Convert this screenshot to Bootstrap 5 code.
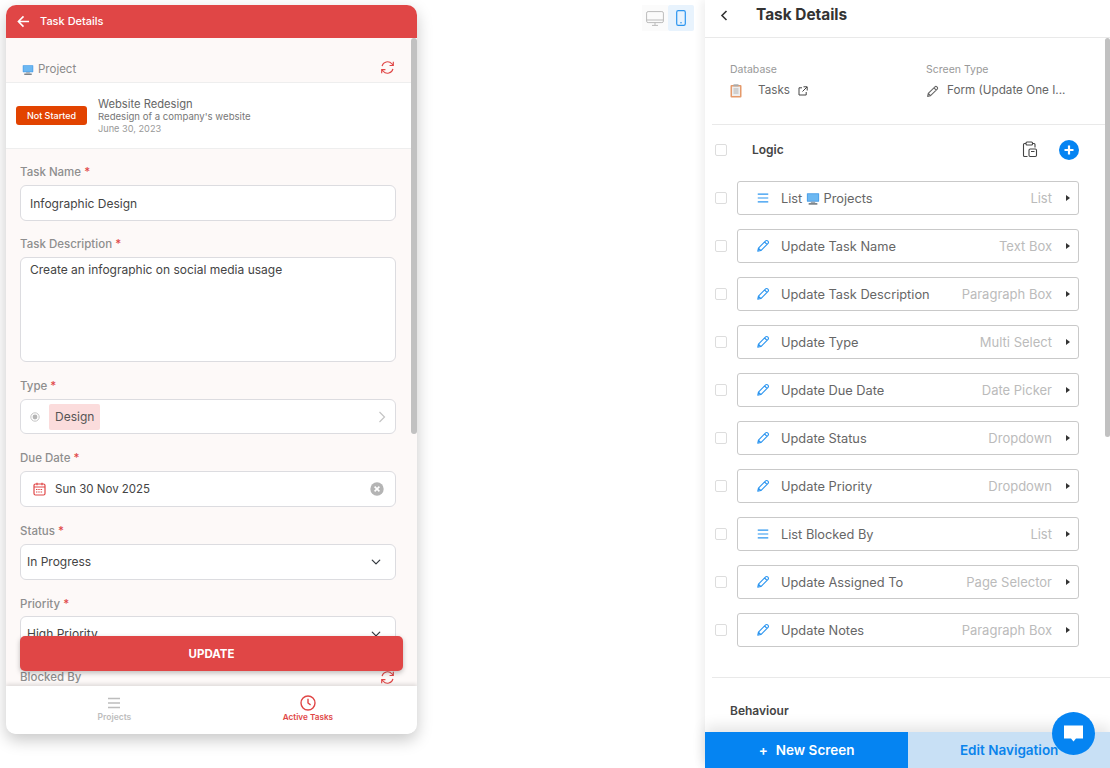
<!DOCTYPE html>
<html lang="en">
<head>
    <meta charset="UTF-8">
    <title>Task Details</title>
    <link href="https://cdn.jsdelivr.net/npm/bootstrap@5.3.0/dist/css/bootstrap.min.css" rel="stylesheet">
    <style>
        body { font-family: Inter, "Liberation Sans", sans-serif; height: 768px; overflow: hidden; background: #fff; color: #555; font-size: 13px; }

        /* phone preview */
        .phone { width: 411px; height: 729px; margin: 5px 0 0 6px; border-radius: 10px; box-shadow: 0 6px 16px rgba(0,0,0,.22); background: #fff; overflow: hidden; flex: none; }
        .phone-head { height: 33px; background: #e04646; color: #fff; font-weight: 500; font-size: 11px; padding-left: 11px; gap: 6px; }
        .phone-body { height: 648px; background: #fdf9f8; overflow: hidden; position: relative; }
        .phone-bar { position: absolute; right: 0; top: 0; width: 6px; height: 396px; background: #c1c1c1; border-radius: 3px; }
        .proj-row { height: 45px; padding: 22px 22px 0 16px; border-bottom: 1px solid #eee; color: #8b8b8b; font-size: 11.5px; }
        .proj-row span { line-height: 15px; margin-top: 1px; padding-top: 1px; }
        .proj-card { height: 66px; background: #fff; border-bottom: 1px solid #eee; padding-left: 10px; gap: 11px; }
        .status-tag { width: 71px; height: 19px; background: #e24300; color: #fff; font-size: 9px; border-radius: 3px; font-weight: 500; }
        .proj-title { font-size: 11.2px; line-height: 14px; color: #666; padding-top: 1px; }
        .proj-sub { font-size: 9.6px; line-height: 12px; color: #777; }
        .proj-date { font-size: 9.2px; line-height: 12px; color: #999; }
        .fields { padding: 16px 21px 0 14px; }
        .fld-label { font-size: 11.5px; line-height: 15px; color: #8e8e8e; margin-bottom: 5px; font-weight: 500; }
        .fld-label b { color: #e04646; font-weight: 500; }
        .fields .form-control, .fields .form-select, .pick-box { border: 1px solid #dcdce0; border-radius: 6px; font-size: 12px; color: #444; background-color: #fff; }
        .fields .form-control { height: 36px; padding: 0 9px; margin-bottom: 16px; }
        .fields textarea.form-control { height: 105px; padding: 3px 9px; margin-bottom: 17px; resize: none; }
        .fields .form-select { height: 36px; padding: 0 6px; margin-bottom: 17px; background-position: right 13px center; background-size: 12px 10px; }
        .pick-box { height: 35px; padding: 0 9px; margin-bottom: 17px; }
        .date-box { height: 36px; padding: 0 11px 0 12px; margin-bottom: 17px; gap: 9px; font-size: 11.5px; }
        .date-box span { padding-top: 2px; }
        .type-chip { background: #fbdcdc; border-radius: 2px; height: 26px; padding: 0 6px; margin-left: 9px; line-height: 26px; color: #555; }
        .prio-label { margin-bottom: 4px; }
        .blocked { margin-top: 18px; padding-right: 1px; }
        .btn-update { position: absolute; left: 14px; top: 598px; width: 383px; height: 35px; padding: 3px 0 0; background: #e04646; color: #fff; font-weight: 700; font-size: 11.5px; border: 0; border-radius: 5px; box-shadow: 0 2px 5px rgba(0,0,0,.25); }
        .btn-update:hover { background: #e04646; color: #fff; }
        .phone-foot { height: 48px; background: #fff; box-shadow: 0 -2px 4px rgba(0,0,0,.12); position: relative; }
        .foot-tab { font-size: 8.5px; font-weight: 600; color: #bdbdbd; padding-top: 9px; line-height: 11px; gap: 1px; }
        .foot-tab.on { color: #e04646; font-size: 8.2px; }
        .foot-tab:first-child { width: 53%; padding-right: 1px; }
        .foot-tab:last-child { width: 47%; padding-right: 25px; }

        /* device switch */
        .middle { flex: 1 1 auto; padding: 5px 11px 0 0; }
        .device-btn { width: 26px; height: 26px; background: #fbfbfb; }
        .device-btn.on { background: #e8f3fd; border-radius: 2px; }

        /* builder panel */
        .side { width: 405px; height: 768px; flex: none; position: relative; box-shadow: -4px 0 8px rgba(0,0,0,.06); }
        .side-head { height: 38px; border-bottom: 1px solid #e9e9e9; padding: 0 0 6px 15px; gap: 28px; }
        .side-head h1 { font-size: 15.4px; font-weight: 700; color: #333; margin: 0; }
        .side-bar { position: absolute; right: 0; top: 38px; width: 5px; height: 399px; background: #c1c1c1; border-radius: 3px; }
        .meta { height: 87px; margin-left: 7px; border-bottom: 1px solid #e9e9e9; padding: 25px 0 0 18px; }
        .meta-cap { font-size: 10.5px; color: #999; line-height: 13px; margin-bottom: 7px; }
        .meta-val { font-size: 11.7px; color: #666; height: 16px; }
        .meta-a { width: 196px; }
        .logic-row { height: 49px; padding: 0 31px 0 10px; }
        .chk.form-check-input { width: 12px; height: 12px; margin: 0; border: 1px solid #ddd; border-radius: 2px; flex: none; }
        .logic-row strong { font-size: 12px; color: #444; margin-left: 25px; font-weight: 600; }
        .clip-icon { margin-right: 21px; }
        .step-row { padding-left: 10px; height: 48px; gap: 10px; }
        .step-box { width: 342px; height: 34px; border: 1px solid #c9c9c9; border-radius: 3px; padding: 0 8px 0 18px; font-size: 12.8px; color: #666; }
        .step-box .step-kind { margin-left: auto; margin-right: 14px; color: #bbb; font-size: 13px; padding-top: 1px; }
        .step-name { margin-left: 11px; padding-top: 1px; }
        .arrow-r { width: 0; height: 0; border-left: 4px solid #333; border-top: 3.5px solid transparent; border-bottom: 3.5px solid transparent; }
        .steps-end { margin: 23px 0 0 7px; border-top: 1px solid #e9e9e9; padding: 24px 0 0 18px; font-size: 12px; font-weight: 600; color: #444; }
        .side-foot { position: absolute; left: 0; right: 0; bottom: 0; height: 36px; box-shadow: 0 -6px 14px rgba(0,0,0,.1); }
        .foot-new, .foot-nav { width: 50.2%; font-size: 13.5px; font-weight: 600; border: 0; border-radius: 0; }
        .foot-new, .foot-new:hover { background: #0584f2; color: #fff; }
        .foot-nav, .foot-nav:hover { background: #c8e0f5; color: #0a84ec; width: 49.8%; }
        .chat-bubble { position: absolute; left: 347px; top: 712px; width: 43px; height: 43px; border-radius: 50%; background: #0584f2; }
    </style>
</head>
<body class="d-flex">
    <svg width="0" height="0" class="position-absolute">
        <defs>
            <symbol id="sync" viewBox="0 0 16 16"><path d="M2.2 6.6A6 6 0 0 1 12.6 4l1.4 1.6M13.8 9.4A6 6 0 0 1 3.4 12L2 10.4M14.2 1.8V5.8H10.2M1.8 14.2V10.2H5.8" fill="none" stroke="#e04646" stroke-width="1.2"/></symbol>
            <symbol id="pc" viewBox="0 0 16 16"><rect x="1" y="1.5" width="14" height="9.5" rx=".6" fill="#4a9fe8"/><rect x="2" y="2.5" width="12" height="7.5" fill="#6cb8f2"/><rect x="5.5" y="11" width="5" height="1.5" fill="#9aa3aa"/><rect x="3" y="12.5" width="10" height="2.2" rx=".4" fill="#7d858c"/></symbol>
            <symbol id="pen" viewBox="0 0 16 16"><path d="M2 14l.8-3.6L11 2.2a1.6 1.6 0 0 1 2.3 0l.5.5a1.6 1.6 0 0 1 0 2.3L5.6 13.2zM2.8 10.4l2.8 2.8M9.8 3.4l2.8 2.8" fill="none" stroke="currentColor" stroke-width="1.3" stroke-linejoin="round"/></symbol>
            <symbol id="bars" viewBox="0 0 16 16"><path d="M2 3.5h12M2 8h12M2 12.5h12" fill="none" stroke="currentColor" stroke-width="1.3"/></symbol>
        </defs>
    </svg>

    <div class="phone d-flex flex-column">
        <div class="phone-head d-flex align-items-center">
            <svg width="13" height="13" viewBox="0 0 14 14"><path d="M13 7H1.5M7 1.5L1.5 7 7 12.5" fill="none" stroke="#fff" stroke-width="1.7"/></svg>
            <span class="ms-1">Task Details</span>
        </div>
        <div class="phone-body">
            <div class="proj-row d-flex justify-content-between align-items-start">
                <span class="d-flex align-items-center gap-1"><svg width="12" height="12"><use href="#pc"/></svg>Project</span>
                <svg width="15" height="15"><use href="#sync"/></svg>
            </div>
            <div class="proj-card d-flex align-items-center">
                <span class="status-tag d-flex align-items-center justify-content-center">Not Started</span>
                <div>
                    <div class="proj-title">Website Redesign</div>
                    <div class="proj-sub">Redesign of a company's website</div>
                    <div class="proj-date">June 30, 2023</div>
                </div>
            </div>
            <div class="fields">
                <div class="fld-label">Task Name <b>*</b></div>
                <input class="form-control" type="text" value="Infographic Design">
                <div class="fld-label">Task Description <b>*</b></div>
                <textarea class="form-control">Create an infographic on social media usage</textarea>
                <div class="fld-label">Type <b>*</b></div>
                <div class="pick-box d-flex align-items-center">
                    <svg width="10" height="10" viewBox="0 0 10 10"><circle cx="5" cy="5" r="4.2" fill="none" stroke="#c4c4c4"/><circle cx="5" cy="5" r="2.4" fill="#b5b5b5"/></svg>
                    <span class="type-chip">Design</span>
                    <svg class="ms-auto" width="8" height="12" viewBox="0 0 8 12"><path d="M1.5 1l5 5-5 5" fill="none" stroke="#c4c4c4" stroke-width="1.2"/></svg>
                </div>
                <div class="fld-label">Due Date <b>*</b></div>
                <div class="pick-box date-box d-flex align-items-center">
                    <svg width="13" height="14" viewBox="0 0 13 14"><rect x="1" y="2" width="11" height="11" rx="1.5" fill="none" stroke="#e04646" stroke-width="1.2"/><path d="M1 5h11M4 .8v2.4M9 .8v2.4" stroke="#e04646" stroke-width="1.2"/><path d="M3 7.5h7M3 10h7" stroke="#e04646" stroke-dasharray="1.4 .9"/></svg>
                    <span>Sun 30 Nov 2025</span>
                    <svg class="ms-auto" width="14" height="14" viewBox="0 0 14 14"><circle cx="7" cy="7" r="6.7" fill="#b4b4b4"/><path d="M4.6 4.6l4.8 4.8M9.4 4.6l-4.8 4.8" stroke="#fff" stroke-width="1.6"/></svg>
                </div>
                <div class="fld-label">Status <b>*</b></div>
                <select class="form-select"><option>In Progress</option></select>
                <div class="fld-label prio-label">Priority <b>*</b></div>
                <select class="form-select mb-0"><option>High Priority</option></select>
                <div class="blocked fld-label d-flex justify-content-between align-items-center">Blocked By
                    <svg width="15" height="15"><use href="#sync"/></svg>
                </div>
            </div>
            <button class="btn btn-update" type="button">UPDATE</button>
            <div class="phone-bar"></div>
        </div>
        <div class="phone-foot d-flex">
            <div class="foot-tab d-flex flex-column align-items-center">
                <svg width="16" height="16"><use href="#bars"/></svg>
                <span>Projects</span>
            </div>
            <div class="foot-tab on d-flex flex-column align-items-center">
                <svg width="16" height="16" viewBox="0 0 16 16"><circle cx="8" cy="8" r="7" fill="none" stroke="#e04646" stroke-width="1.4"/><path d="M8 3.8V8l2.6 1.8" fill="none" stroke="#e04646" stroke-width="1.4"/></svg>
                <span>Active Tasks</span>
            </div>
        </div>
    </div>

    <div class="middle d-flex justify-content-end align-items-start">
        <div class="device-btn d-flex align-items-center justify-content-center">
            <svg width="18" height="15" viewBox="0 0 18 15"><rect x=".6" y=".6" width="16.8" height="11" rx="1.5" fill="none" stroke="#bbb"/><path d="M.6 9h16.8M6 14.4h6M9 11.6v2.8" stroke="#bbb"/></svg>
        </div>
        <div class="device-btn on d-flex align-items-center justify-content-center">
            <svg width="10" height="16" viewBox="0 0 10 16"><rect x=".7" y=".7" width="8.6" height="14.6" rx="1.6" fill="none" stroke="#2b95f0" stroke-width="1.2"/><circle cx="5" cy="12.8" r=".8" fill="#2b95f0"/></svg>
        </div>
    </div>

    <div class="side">
        <div class="side-head d-flex align-items-center">
            <svg width="8" height="11" viewBox="0 0 8 11"><path d="M6.5 1L2 5.5 6.5 10" fill="none" stroke="#333" stroke-width="1.6"/></svg>
            <h1>Task Details</h1>
        </div>
        <div class="meta d-flex">
            <div class="meta-a">
                <div class="meta-cap">Database</div>
                <div class="meta-val d-flex align-items-center">
                    <svg width="12" height="14" viewBox="0 0 12 14" class="me-3"><rect x=".5" y="1" width="11" height="12.5" rx="1" fill="#e59a6b"/><rect x="2" y="2.5" width="8" height="9.5" fill="#eee"/><path d="M3.5 5h5M3.5 7h5M3.5 9h5" stroke="#999" stroke-width=".7"/><rect x="3.5" y=".3" width="5" height="2" fill="#aaa"/></svg>
                    <span>Tasks</span>
                    <svg width="10" height="10" viewBox="0 0 10 10" class="ms-2"><path d="M4 1.8H1v7.2h7.2V6M5.5.8h3.7v3.7M9 1L4.5 5.5" fill="none" stroke="#444" stroke-width="1"/></svg>
                </div>
            </div>
            <div>
                <div class="meta-cap">Screen Type</div>
                <div class="meta-val d-flex align-items-center gap-2">
                    <svg width="13" height="13" style="color:#666"><use href="#pen"/></svg>
                    <span>Form (Update One I...</span>
                </div>
            </div>
        </div>
        <div class="logic-row d-flex align-items-center">
            <input class="form-check-input chk" type="checkbox">
            <strong>Logic</strong>
            <svg width="16" height="17" viewBox="0 0 16 17" class="ms-auto clip-icon"><path d="M4 2.5H2.5a1 1 0 0 0-1 1v11a1 1 0 0 0 1 1h3M10.5 2.5H12a1 1 0 0 1 1 1v3" fill="none" stroke="#444" stroke-width="1.1"/><rect x="4" y="1" width="6.5" height="3" rx="1" fill="none" stroke="#444" stroke-width="1.1"/><rect x="7" y="8" width="7.5" height="7.5" rx="1.2" fill="none" stroke="#444" stroke-width="1.1"/><path d="M9 10.5h3.5" stroke="#444"/></svg>
            <svg width="20" height="20" viewBox="0 0 20 20"><circle cx="10" cy="10" r="10" fill="#0584f2"/><path d="M10 5.5v9M5.5 10h9" stroke="#fff" stroke-width="2.2"/></svg>
        </div>
        <div id="steps"></div>
        <div class="steps-end">Behaviour</div>
        <div class="side-bar"></div>
        <div class="side-foot d-flex">
            <button class="btn foot-new d-flex align-items-center justify-content-center gap-2" type="button"><span>+</span>New Screen</button>
            <button class="btn foot-nav" type="button">Edit Navigation</button>
        </div>
        <div class="chat-bubble d-flex align-items-center justify-content-center">
            <svg width="21" height="19" viewBox="0 0 21 19"><path d="M1 1.5h19v13h-7l-2.5 3-2.5-3H1z" fill="#fff"/></svg>
        </div>
    </div>

    <script>
        var steps = [
            ["bars", "List", "List", true],
            ["pen", "Update Task Name", "Text Box"],
            ["pen", "Update Task Description", "Paragraph Box"],
            ["pen", "Update Type", "Multi Select"],
            ["pen", "Update Due Date", "Date Picker"],
            ["pen", "Update Status", "Dropdown"],
            ["pen", "Update Priority", "Dropdown"],
            ["bars", "List Blocked By", "List"],
            ["pen", "Update Assigned To", "Page Selector"],
            ["pen", "Update Notes", "Paragraph Box"]
        ];
        document.getElementById("steps").innerHTML = steps.map(function (s) {
            var extra = s[3] ? ' <svg width="14" height="14" class="align-text-bottom"><use href="#pc"/></svg> Projects' : '';
            return '<div class="step-row d-flex align-items-center">' +
                '<input class="form-check-input chk" type="checkbox">' +
                '<div class="step-box d-flex align-items-center">' +
                '<svg width="14" height="14" style="color:#2b95f0"><use href="#' + s[0] + '"/></svg>' +
                '<span class="step-name">' + s[1] + extra + '</span>' +
                '<span class="step-kind">' + s[2] + '</span><span class="arrow-r"></span></div></div>';
        }).join("");
    </script>
    <script src="https://cdn.jsdelivr.net/npm/bootstrap@5.3.0/dist/js/bootstrap.bundle.min.js"></script>
</body>
</html>
